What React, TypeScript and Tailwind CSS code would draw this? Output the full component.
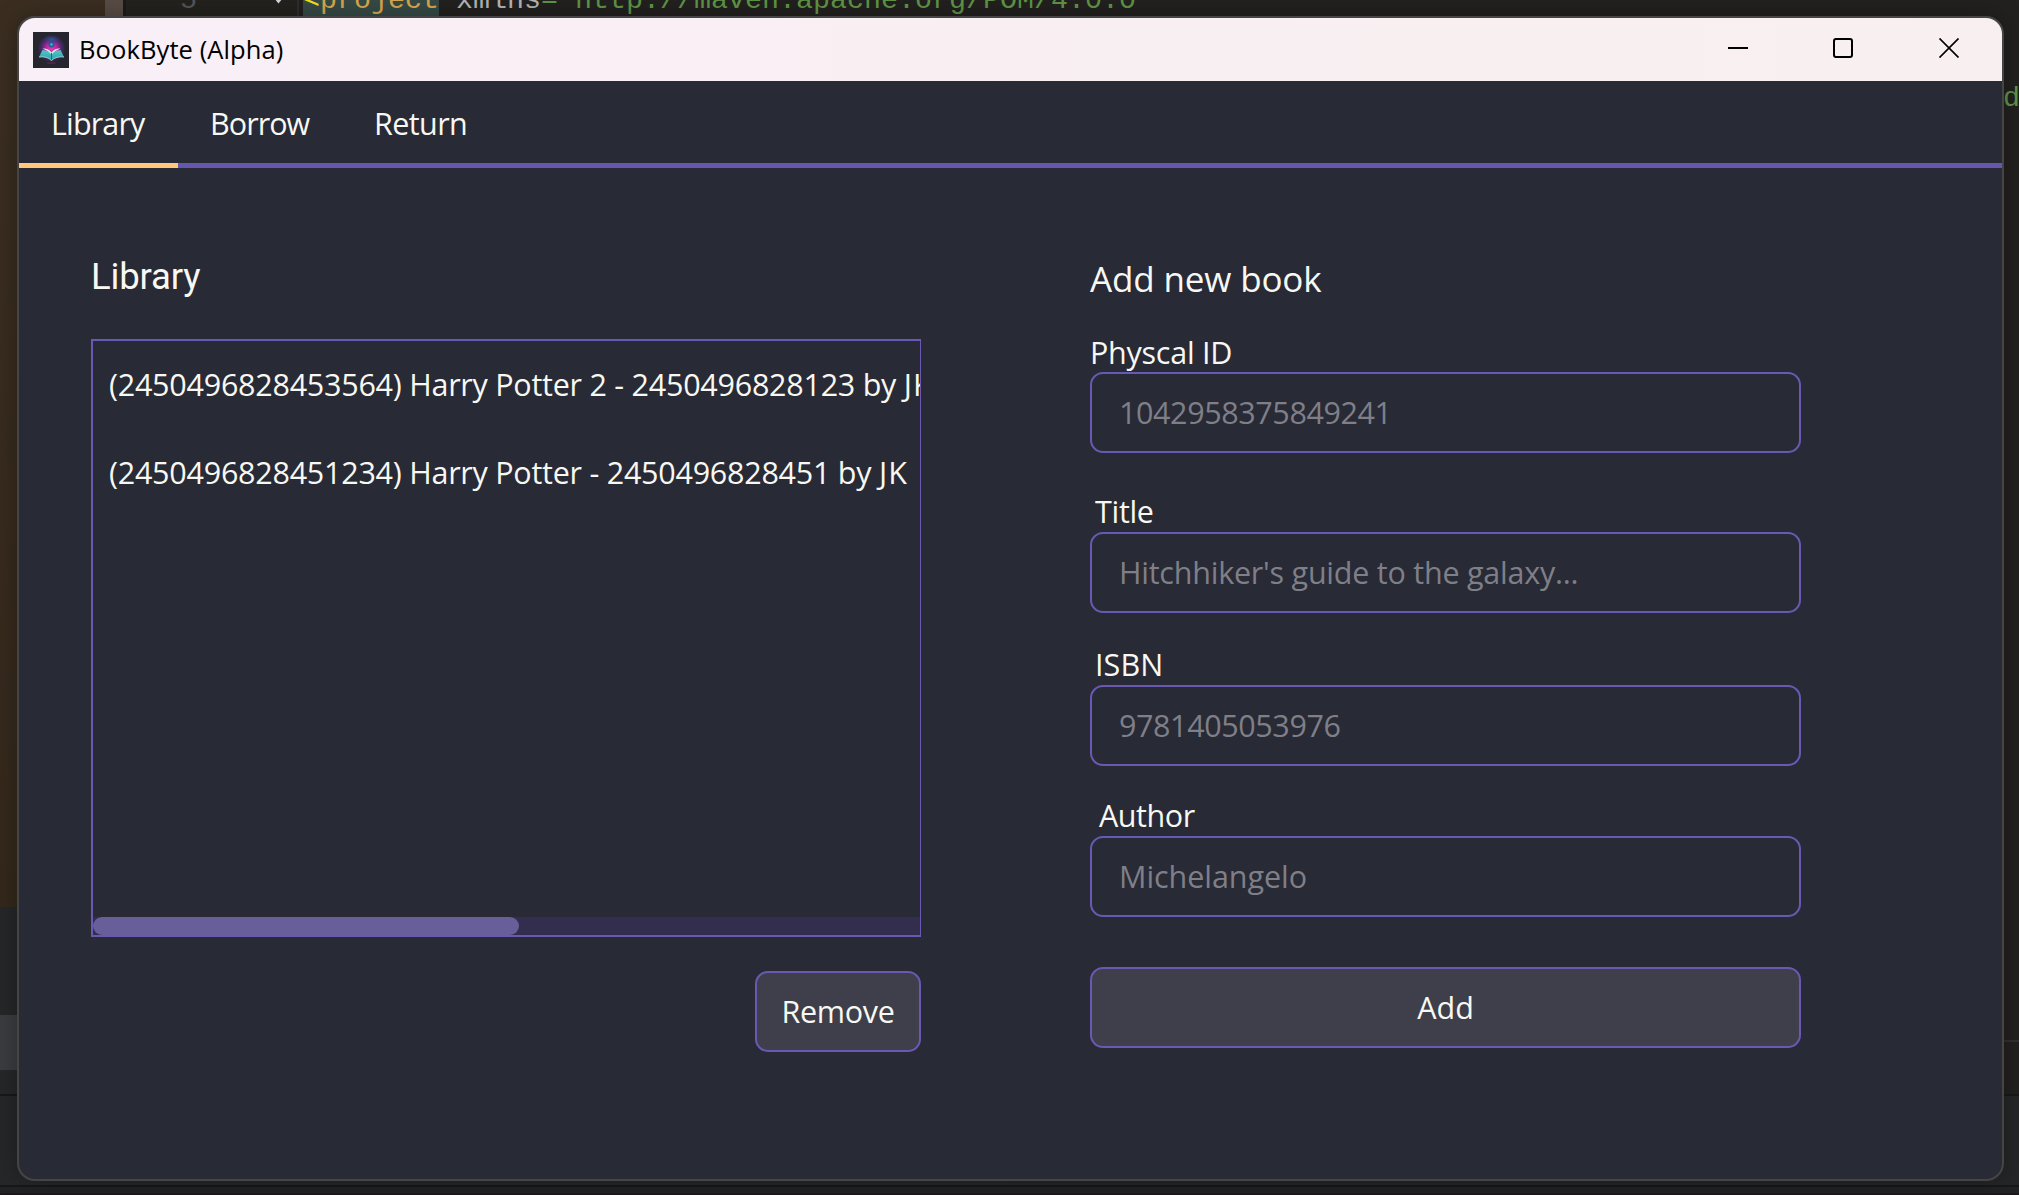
import React from "react";

function EditorBackdrop() {
  return (
    <div className="absolute inset-0 flex flex-col overflow-hidden bg-[#22211f]">
      <div className="flex h-[907px]">
        <div className="w-[105px] bg-linear-to-b from-[#3b2e21] to-[#34281b]" />
        <div className="w-[18px] bg-[#584d45]" />
        <div className="w-[3px] bg-[#1c1b1a]" />
        <div className="w-[173px] border-r-2 border-[#2f2e2c] bg-[#23221f]" />
        <div className="flex-1 bg-[#22211f]" />
      </div>
      <div className="flex flex-1">
        <div className="flex w-1/2 flex-col bg-[#252729]">
          <div className="mt-[108px] h-[55px] bg-[#3b3c3f]" />
          <div className="mt-[24px] h-[2px] bg-[#17181a]" />
        </div>
        <div className="flex w-1/2 flex-col">
          <div className="mt-[133px] h-[2px] bg-[#313133]" />
          <div className="mt-[52px] h-[2px] bg-[#18191a]" />
          <div className="flex-1 bg-[#242628]" />
        </div>
      </div>
      <div className="absolute inset-x-0 bottom-0 flex h-[10px] flex-col bg-[#212324]">
        <div className="h-[2px] bg-[#17181a]" />
        <div className="mt-auto h-[2px] bg-[#1f171c]" />
      </div>
      <div className="absolute -top-[16px] left-[180px] font-['Liberation_Mono'] text-[28.33px] leading-[34px] text-[#55565a]">5</div>
      <svg className="absolute top-0 left-[272px]" width="13" height="5" viewBox="0 0 13 5">
        <path d="M2 -4 L6.5 1.5 L11 -4" fill="none" stroke="#d6d7da" strokeWidth="2.5" />
      </svg>
      <div className="absolute -top-[16px] left-[303px] flex font-['Liberation_Mono'] text-[28.33px] leading-[34px] whitespace-pre">
        <span className="bg-[#364a46] text-[#d9a84e]">
          <span className="text-[#f5e11c]">&lt;</span>project
        </span>
        <span className="text-[#b4b5b8]"> xmlns</span>
        <span className="text-[#5f9546]">="http://maven.apache.org/POM/4.0.0</span>
      </div>
      <div className="absolute top-[82px] left-[2003px] font-['Liberation_Mono'] text-[28.33px] leading-[34px] text-[#5f9546]">d</div>
    </div>
  );
}

function AppIcon() {
  return (
    <svg width="36" height="36" viewBox="0 0 36 36" className="ml-[14px]">
      <defs>
        <radialGradient id="glow" cx="0.5" cy="0.52" r="0.5">
          <stop offset="0" stopColor="#e03fb8" />
          <stop offset="0.4" stopColor="#b3259f" />
          <stop offset="0.7" stopColor="#4a2a6e" />
          <stop offset="1" stopColor="#25262e" />
        </radialGradient>
        <radialGradient id="sky" cx="0.5" cy="0.5" r="0.5">
          <stop offset="0" stopColor="#2b5a94" />
          <stop offset="1" stopColor="#2b3a74" stopOpacity="0" />
        </radialGradient>
        <linearGradient id="page" x1="0" y1="0" x2="0" y2="1">
          <stop offset="0" stopColor="#5cc4c4" />
          <stop offset="1" stopColor="#1fa3ac" />
        </linearGradient>
      </defs>
      <rect width="36" height="36" fill="#25262e" />
      <circle cx="18.5" cy="16" r="14" fill="url(#glow)" />
      <ellipse cx="18.5" cy="7.5" rx="9" ry="4.5" fill="url(#sky)" />
      <circle cx="18.5" cy="12.5" r="3" fill="#1f5f94" />
      <circle cx="18.5" cy="12.5" r="1.2" fill="#45b8c4" />
      <path d="M6 25 L9.500 18 Q15 18.500 18.500 22 Q22 18.500 27.500 18 L31 25 Q23 24 18.500 28.500 Q14 24 6 25Z" fill="url(#page)" />
      <path d="M9.500 16.500 Q15.500 16 18.500 20.500 Q21.500 16 27.500 16.500 Q22 18.500 18.500 22.500 Q15 18.500 9.500 16.500Z" fill="#d3ece4" />
      <path d="M18.500 21 V28" stroke="#157280" strokeWidth="1" />
      <path d="M6 25 Q14 24 18.500 28.500 Q23 24 31 25" fill="none" stroke="#b5e6e0" strokeWidth="0.8" />
      <ellipse cx="18.500" cy="31" rx="5" ry="0.8" fill="#7b2e50" opacity="0.6" />
    </svg>
  );
}

function TitleBar() {
  return (
    <header className="flex h-[63px] shrink-0 items-center bg-linear-to-r from-[#f9eff7] via-[#f9eff3] to-[#f8f0f0]">
      <AppIcon />
      <h1 className="ml-[10px] text-[25.5px] tracking-[0.1px] text-black">BookByte (Alpha)</h1>
      <svg className="mr-[43px] mb-[3px] ml-auto" width="231" height="20" viewBox="0 0 231 20" fill="none" stroke="#000" strokeWidth="2">
        <path d="M0 10H20" />
        <rect x="106" y="1" width="18" height="18" rx="2" />
        <path d="M211.500 0.500L230.500 19.500M230.500 0.500L211.500 19.500" strokeWidth="1.700" />
      </svg>
    </header>
  );
}

function Tabs() {
  return (
    <nav className="flex h-[87px] shrink-0 text-[30.5px]">
      <div className="flex w-[159px] items-center border-b-5 border-[#ffc87c] pt-[4px] pl-[32px] tracking-[-0.85px]">Library</div>
      <div className="flex w-[164px] items-center border-b-5 border-[#6556ae] pt-[4px] pl-[32px] tracking-[-0.95px]">Borrow</div>
      <div className="flex flex-1 items-center border-b-5 border-[#6556ae] pt-[4px] pl-[32px] tracking-[-0.6px]">Return</div>
    </nav>
  );
}

type FieldProps = { label: string; hint: string; className: string; labelClass: string; hintClass: string };

function Field({ label, hint, className, labelClass, hintClass }: FieldProps) {
  return (
    <label className={"flex flex-col " + className}>
      <span className={"h-8 leading-8 " + labelClass}>{label}</span>
      <input
        placeholder={hint}
        className={"h-[81px] w-full rounded-[13px] border-2 border-[#6959b3] bg-transparent pb-[1px] pl-[27px] outline-none placeholder:text-[#7f7f87] " + hintClass}
      />
    </label>
  );
}

function BookRow({ text, author }: { text: string; author: string }) {
  return (
    <div className="flex h-[88px] shrink-0 items-center pl-[16px] tracking-[-0.25px] whitespace-pre">
      <span>{text + " by "}</span>
      <span className="tracking-[1px]">{author}</span>
    </div>
  );
}

function LibraryColumn() {
  return (
    <section className="flex w-[830px] flex-col pt-[89px]">
      <h2 className="font-['Roboto'] text-[36.5px] leading-10 tracking-[-0.15px]">Library</h2>
      <div className="mt-[42px] flex h-[598px] flex-col overflow-hidden border-2 border-r border-[#6959b3]">
        <BookRow text="(2450496828453564) Harry Potter 2 - 2450496828123" author="JK" />
        <BookRow text="(2450496828451234) Harry Potter - 2450496828451" author="JK" />
        <div className="mt-auto h-[18px] shrink-0 bg-[#332d4e]">
          <div className="h-full w-[426px] rounded-full bg-[#685f9a]" />
        </div>
      </div>
      <button className="mt-[34px] h-[81px] w-[166px] self-end rounded-[13px] border-2 border-[#6959b3] bg-[#3e3f4a] tracking-[-0.3px]">
        Remove
      </button>
    </section>
  );
}

function AddBookColumn() {
  return (
    <section className="ml-px flex w-[711px] flex-col pt-[91px]">
      <h2 className="text-[35px] leading-10 tracking-[-0.15px]">Add new book</h2>
      <Field label="Physcal ID" hint="1042958375849241" className="mt-[37px] gap-[4px]" labelClass="tracking-[-0.25px]" hintClass="tracking-[-0.4px]" />
      <Field label="Title" hint="Hitchhiker's guide to the galaxy..." className="mt-[42px] gap-[5px]" labelClass="pl-[5px] tracking-[-0.3px]" hintClass="tracking-[-0.23px]" />
      <Field label="ISBN" hint="9781405053976" className="mt-[35px] gap-[5px]" labelClass="pl-[5px] tracking-[0.1px]" hintClass="tracking-[-0.4px]" />
      <Field label="Author" hint="Michelangelo" className="mt-[33px] gap-[5px]" labelClass="pl-[9px] tracking-[-0.45px]" hintClass="tracking-[-0.05px]" />
      <button className="mt-[50px] h-[81px] rounded-[13px] border-2 border-[#6959b3] bg-[#3e3f4a]">Add</button>
    </section>
  );
}

export default function App() {
  return (
    <div className="relative h-[1195px] w-[2019px] overflow-hidden">
      <EditorBackdrop />
      <div className="absolute top-[16px] left-[17px] flex h-[1165px] w-[1987px] flex-col overflow-hidden rounded-[18px] border-2 border-[#464545] bg-[#282a36] font-['Open_Sans',sans-serif] text-[30.5px] text-[#f8f8f2] shadow-[0_0_24px_rgba(0,0,0,0.3)]">
        <TitleBar />
        <Tabs />
        <main className="flex flex-1 gap-[168px] pl-[72px]">
          <LibraryColumn />
          <AddBookColumn />
        </main>
      </div>
    </div>
  );
}
